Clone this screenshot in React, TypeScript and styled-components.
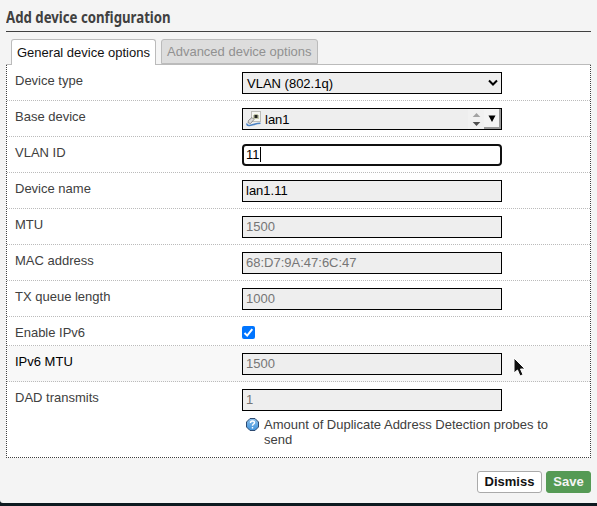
import React from 'react';
import styled, { createGlobalStyle, css } from 'styled-components';

const GlobalStyle = createGlobalStyle`
  * { box-sizing: border-box; }
  html, body { margin: 0; background: #0d1a20; overflow: hidden; }
  body { font: 13px/15px "Liberation Sans", Arial, sans-serif; color: #404040; }
`;

const Modal = styled.main`
  position: relative;
  display: flex;
  flex-direction: column;
  width: 597px;
  height: 503px;
  padding: 0 6px;
  background: #f4f4f4;
  border-bottom-left-radius: 3px;
`;

const Title = styled.h4`
  height: 32px;
  margin: 0 0 7px;
  padding-top: 7px;
  border-bottom: 1px solid #404040;
  font: bold 16px/20px "Noto Sans", sans-serif;
  width: 585px;
`;

const TitleText = styled.span`
  display: inline-block;
  transform: scaleX(0.826);
  transform-origin: left;
  white-space: nowrap;
`;

const Tabs = styled.div`
  display: flex;
  gap: 5px;
  height: 26px;
  width: 585px;
  padding-left: 5px;
  box-shadow: inset 0 -1px #bbb;
`;

const Tab = styled.button<{ $active?: boolean }>`
  width: ${p => (p.$active ? 145 : 157)}px;
  height: ${p => (p.$active ? 26 : 25)}px;
  padding: ${p => (p.$active ? '0 0 0 5px' : '0 0 0 5px')};
  border: 1px solid #bbb;
  border-bottom-width: ${p => (p.$active ? 0 : 1)}px;
  border-radius: 3px 3px 0 0;
  background: ${p => (p.$active ? '#fff' : '#ddd')};
  color: ${p => (p.$active ? '#111' : '#919191')};
  font: inherit;
  text-align: left;
  white-space: nowrap;
`;

const Panel = styled.section`
  width: 585px;
  height: 393px;
  border: 1px dotted #404040;
  border-top: 0;
  background: #fff;
`;

const Row = styled.div<{ $height?: number; $hover?: boolean; $last?: boolean }>`
  display: grid;
  grid-template-columns: 227px 1fr;
  height: ${p => p.$height ?? 36}px;
  padding: 7px 0 0 8px;
  border-bottom: ${p => (p.$last ? 'none' : '1px dotted #bbb')};
  background: ${p => (p.$hover ? '#f8f8f8' : '#fff')};
  color: ${p => (p.$hover ? '#000' : '#404040')};
`;

const Label = styled.label`
  padding-top: 1px;
`;

const field = css`
  width: 260px;
  height: 22px;
  border: 1px solid #000;
  border-radius: 0;
  background: #eee;
  color: #000;
  font: inherit;
`;

const Input = styled.input`
  ${field}
  display: block;
  padding: 0 3px 1px;
  outline: none;
  &::placeholder { color: #757575; opacity: 1; }
`;

const FocusField = styled.div`
  ${field}
  display: flex;
  align-items: center;
  padding: 0 0 1px 2px;
  border: 2px solid #101010;
  border-radius: 4px;
  background: #fff;
`;

const Caret = styled.span`
  width: 1px;
  height: 15px;
  background: #000;
`;

const SelectBox = styled.div`
  ${field}
  display: flex;
  align-items: center;
  justify-content: space-between;
  padding: 0 3px 0 4px;
`;

const DropBox = styled.div`
  ${field}
  display: flex;
  align-items: center;
  padding-left: 3px;
`;

const DropValue = styled.span`
  flex: 1;
  padding-left: 3px;
`;

const Spinner = styled.svg`
  width: 16px;
  height: 20px;
  background: #f1f1f1;
`;

const DropButton = styled.span`
  display: flex;
  align-items: center;
  justify-content: center;
  width: 17px;
  height: 20px;
  border-right: 2px solid #999;
  border-bottom: 2px solid #999;
  background: #f4f4f4;
`;

const Check = styled.span`
  display: block;
  width: 13px;
  height: 13px;
  margin-top: 2px;
  border-radius: 2px;
  background: #0075ff;
  svg { display: block; }
`;

const Help = styled.div`
  display: flex;
  gap: 5px;
  margin-top: 6px;
  padding-left: 4px;
  width: 315px;
  svg { flex: none; margin-top: 1px; }
`;

const Footer = styled.footer`
  display: flex;
  justify-content: flex-end;
  gap: 4px;
  width: 585px;
  padding-top: 13px;
`;

const Button = styled.button<{ $save?: boolean }>`
  width: ${p => (p.$save ? 45 : 65)}px;
  height: 22px;
  padding: 0 0 1px;
  border: 1px solid ${p => (p.$save ? '#559a55' : '#aaa')};
  border-radius: 3px;
  background: ${p => (p.$save ? '#559a55' : '#fff')};
  color: ${p => (p.$save ? '#f4f4f4' : '#111')};
  font: bold 13px/15px "Liberation Sans", Arial, sans-serif;
`;

const Pointer = styled.svg`
  position: absolute;
  left: 513px;
  top: 357px;
`;

function PortIcon() {
  return (
    <svg width="16" height="16" viewBox="0 0 16 16">
      <rect x="5.5" y="0.5" width="9" height="10" fill="#f5f5f2" stroke="#bdbdb8" />
      <path d="M7 4h1.2V3h3.6v1H13v4H7z" fill="#c3c8a9" />
      <rect x="8.500" y="4" width="3" height="3" fill="#222" />
      <path d="M2.500 9.500 6 6.500l2 2-3.500 4-2.500-.8z" fill="#dcdcdc" stroke="#777" strokeWidth=".8" />
      <path d="M1 12.500c-.5 2.500 3 2.200 5.500 1.300 3-1 4.500-1.500 8-1.500" fill="none" stroke="#4d83c4" strokeWidth="1.600" />
    </svg>
  );
}

function HelpIcon() {
  return (
    <svg width="13" height="13" viewBox="0 0 13 13">
      <defs>
        <linearGradient id="help" x2="0" y2="1">
          <stop stopColor="#8dc0ea" />
          <stop offset="1" stopColor="#3e92dc" />
        </linearGradient>
      </defs>
      <path d="M4 .5h5L12.500 4v5L9 12.500H4L.5 9V4z" fill="url(#help)" stroke="#2d4a70" strokeLinejoin="round" />
      <path d="M4.500 5c0-2.600 4-2.600 4-.3C8.500 6 6.500 6 6.500 7.700M6.500 9v1.400" fill="none" stroke="#fff" strokeWidth="1.400" />
    </svg>
  );
}

const fields = [
  { label: 'Device name', value: 'lan1.11' },
  { label: 'MTU', hint: '1500' },
  { label: 'MAC address', hint: '68:D7:9A:47:6C:47' },
  { label: 'TX queue length', hint: '1000' },
];

export default function App() {
  return (
    <>
      <GlobalStyle />
      <Modal>
        <Title><TitleText>Add device configuration</TitleText></Title>
        <Tabs>
          <Tab $active>General device options</Tab>
          <Tab>Advanced device options</Tab>
        </Tabs>
        <Panel>
          <Row>
            <Label>Device type</Label>
            <SelectBox>
              VLAN (802.1q)
              <svg width="10" height="8" viewBox="0 0 10 8"><path d="M1 1.500 5 5.500 9 1.500" fill="none" stroke="#000" strokeWidth="2" /></svg>
            </SelectBox>
          </Row>
          <Row>
            <Label>Base device</Label>
            <DropBox>
              <PortIcon />
              <DropValue>lan1</DropValue>
              <Spinner viewBox="0 0 16 20">
                <path d="M8.500 4 12.300 8H4.700z" fill="#a3a3a3" />
                <path d="M8.500 17 12.300 13H4.700z" fill="#505050" />
              </Spinner>
              <DropButton>
                <svg width="8" height="7"><path d="M0.500 0.500h7L4 7z" fill="#000" /></svg>
              </DropButton>
            </DropBox>
          </Row>
          <Row>
            <Label>VLAN ID</Label>
            <FocusField>11<Caret /></FocusField>
          </Row>
          {fields.map(f => (
            <Row key={f.label}>
              <Label>{f.label}</Label>
              <Input defaultValue={f.value} placeholder={f.hint} />
            </Row>
          ))}
          <Row $height={29}>
            <Label>Enable IPv6</Label>
            <Check>
              <svg width="13" height="13" viewBox="0 0 13 13"><path d="M2.500 7 5.200 9.600 10.300 3.200" fill="none" stroke="#fff" strokeWidth="2" /></svg>
            </Check>
          </Row>
          <Row $hover>
            <Label>IPv6 MTU</Label>
            <Input placeholder="1500" />
          </Row>
          <Row $height={75} $last>
            <Label>DAD transmits</Label>
            <div>
              <Input placeholder="1" />
              <Help><HelpIcon /><span>Amount of Duplicate Address Detection probes to send</span></Help>
            </div>
          </Row>
        </Panel>
        <Footer>
          <Button>Dismiss</Button>
          <Button $save>Save</Button>
        </Footer>
        <Pointer width="14" height="21" viewBox="0 0 14 21">
          <path d="M1 1v15l3.500-3 2.500 6 3-1.300-2.500-5.700H12z" fill="#111" stroke="#fff" />
        </Pointer>
      </Modal>
    </>
  );
}
